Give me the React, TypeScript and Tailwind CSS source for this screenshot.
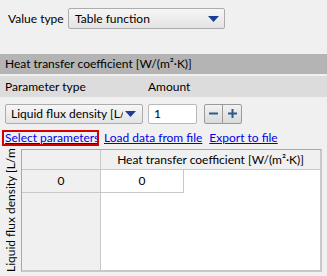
import React from "react";

const font = { fontFamily: "Lato, 'Noto Sans', sans-serif" };

function Arrow() {
  return (
    <svg width="11" height="6" viewBox="0 0 11 6">
      <path d="M0 0 H11 L5.5 6 Z" fill="#1c3f94" />
    </svg>
  );
}

export default function App() {
  return (
    <div className="w-[327px] h-[276px] bg-[#f0f0f0] text-[12px] text-black overflow-hidden relative" style={font}>
      {/* Top row */}
      <div className="flex items-center pt-[8px] pl-[8px] h-[29px]">
        <span className="w-[60px]">Value type</span>
        <div className="w-[157px] h-[21px] rounded-[2px] border border-[#acacac] bg-gradient-to-b from-[#f7f7f7] to-[#e3e3e3] flex items-center justify-between pl-[6px] pr-[5px]">
          <span>Table function</span>
          <Arrow />
        </div>
      </div>

      {/* Gray band */}
      <div className="mt-[25px] h-[20px] bg-[#b4b4b4] flex items-center pl-[5px]">
        Heat transfer coefficient [W/(m²·K)]
      </div>

      {/* Parameter row */}
      <div className="mt-[2px] h-[21px] bg-[#dcdcdc] flex items-center pl-[5px]">
        <span className="w-[143px]">Parameter type</span>
        <span>Amount</span>
      </div>

      {/* Controls */}
      <div className="mt-[6px] flex items-center pl-[5px] h-[21px]">
        <div className="w-[138px] h-[20px] rounded-[2px] border border-[#acacac] bg-gradient-to-b from-[#f7f7f7] to-[#e3e3e3] flex items-center justify-between pl-[5px] pr-[6px] overflow-hidden">
          <span className="whitespace-nowrap overflow-hidden w-[112px]">Liquid flux density [L/m²·s]</span>
          <Arrow />
        </div>
        <div className="ml-[5px] w-[49px] h-[20px] rounded-[2px] border border-[#b9b9b9] bg-white flex items-center pl-[5px]">
          1
        </div>
        <div className="ml-[7px] flex h-[20px] rounded-[2px] border border-[#9a9a9a] bg-gradient-to-b from-[#f2f2f2] to-[#dadada]">
          <div className="w-[18px] flex items-center justify-center border-r border-[#9a9a9a]">
            <svg width="9" height="9" viewBox="0 0 9 9"><rect x="0" y="3.5" width="9" height="2" fill="#2a5b8c" /></svg>
          </div>
          <div className="w-[18px] flex items-center justify-center">
            <svg width="9" height="9" viewBox="0 0 9 9"><rect x="0" y="3.5" width="9" height="2" fill="#2a5b8c" /><rect x="3.5" y="0" width="2" height="9" fill="#2a5b8c" /></svg>
          </div>
        </div>
      </div>

      {/* Links */}
      <div className="mt-[6px] flex items-center h-[16px] pl-[2px]">
        <div className="h-[16px] w-[97px] pl-[1px] border-2 border-[#d40000] flex items-center overflow-hidden">
          <span className="text-[#0000ee] underline leading-none whitespace-nowrap">Select parameters</span>
        </div>
        <span className="ml-[5px] text-[#0000ee] underline">Load data from file</span>
        <span className="ml-[7px] text-[#0000ee] underline">Export to file</span>
      </div>

      {/* Table area */}
      <div className="mt-[3px] flex h-[123px]">
        <div className="w-[21px] h-full overflow-hidden flex justify-center">
          <div className="[writing-mode:vertical-rl] rotate-180 whitespace-nowrap h-full leading-[16px] pb-[1px]">
            Liquid flux density [L/m²·s]
          </div>
        </div>
        <div className="w-[301px] h-full border border-[#a8a8a8] border-r-2 border-b-2 border-r-[#c8c8c8] border-b-[#c8c8c8] bg-white flex flex-col">
          <div className="flex h-[20px] bg-[#f0f0f0] border-b border-[#c8c8c8]">
            <div className="w-[79px] border-r border-[#c8c8c8]" />
            <div className="flex-1 flex items-center justify-center">Heat transfer coefficient [W/(m²·K)]</div>
          </div>
          <div className="flex flex-1">
            <div className="w-[79px] bg-[#f0f0f0] border-r border-[#c8c8c8] flex flex-col">
              <div className="h-[23px] border-b border-[#c8c8c8] flex items-center justify-center">0</div>
            </div>
            <div className="flex-1">
              <div className="w-[83px] h-[23px] border-b border-r border-[#c8c8c8] flex items-center justify-center">0</div>
            </div>
          </div>
        </div>
      </div>
    </div>
  );
}
